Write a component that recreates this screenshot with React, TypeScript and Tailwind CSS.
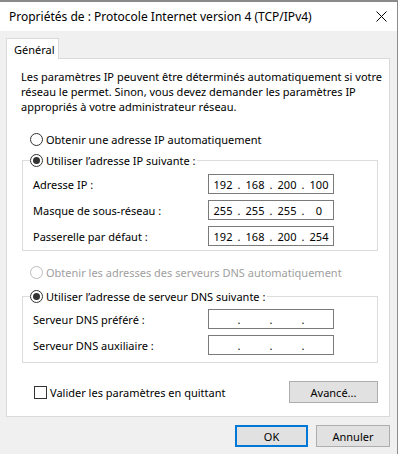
import React from "react";

function Radio({ checked, disabled }: { checked?: boolean; disabled?: boolean }) {
  return (
    <span
      className={
        "w-[13px] h-[13px] rounded-full border bg-white flex items-center justify-center shrink-0 " +
        (disabled ? "border-[#bcbcbc]" : "border-[#333333]")
      }
    >
      {checked && <span className="w-[7px] h-[7px] rounded-full bg-[#333333]" />}
    </span>
  );
}

function IpBox({ values }: { values: string[] }) {
  return (
    <div className="w-[126px] h-[20px] border border-[#7a7a7a] bg-white grid grid-cols-[28px_4px_28px_4px_28px_4px_28px] items-center leading-none">
      {values.map((v, i) => (
        <React.Fragment key={i}>
          {i > 0 && <span className="text-center">.</span>}
          <span className="text-center">{v}</span>
        </React.Fragment>
      ))}
    </div>
  );
}

function Row({ label, values, mt }: { label: string; values: string[]; mt: string }) {
  return (
    <div className={"flex items-center justify-between h-[20px] pl-[10px] pr-[43px] " + mt}>
      <span>{label}</span>
      <IpBox values={values} />
    </div>
  );
}

export default function App() {
  return (
    <div className="w-[402px] h-[454px] bg-white flex overflow-hidden font-['Noto_Sans','Liberation_Sans',sans-serif] text-[11px] text-black leading-[15px]">
      <div className="w-[397px] flex flex-col shrink-0">
        <div className="h-[2px] bg-[#8a8a8a]" />
        <div className="h-[29px] bg-white flex items-center justify-between pl-[9px] pr-[9px]">
          <span className="text-[12px]">Propriétés de : Protocole Internet version 4 (TCP/IPv4)</span>
          <svg width="11" height="11" viewBox="0 0 11 11" className="mr-[1px]">
            <path d="M0.5 0.5 L10.5 10.5 M10.5 0.5 L0.5 10.5" stroke="#000" strokeWidth="1" />
          </svg>
        </div>
        <div className="flex-1 bg-[#f0f0f0] pt-[7px] px-[6px] flex flex-col">
          <div className="w-[53px] h-[21px] bg-white border border-b-0 border-[#d9d9d9] -mb-[1px] relative z-10 flex items-center pl-[7px]">
            Général
          </div>
          <div className="w-[384px] h-[359px] bg-white border border-[#d9d9d9] flex flex-col">
            <p className="pl-[14px] pt-[10px] whitespace-nowrap">
              Les paramètres IP peuvent être déterminés automatiquement si votre
              <br />
              réseau le permet. Sinon, vous devez demander les paramètres IP
              <br />
              appropriés à votre administrateur réseau.
            </p>

            <div className="flex items-center gap-[3px] ml-[23px] mt-[17px] h-[16px]">
              <Radio />
              <span>Obtenir une adresse IP automatiquement</span>
            </div>

            <fieldset className="ml-[15px] mt-[5px] w-[356px] border border-[#dcdcdc] pb-[4px]">
              <legend className="ml-[7px] pr-[2px] flex items-center gap-[3px] h-[16px]">
                <Radio checked />
                <span>Utiliser l’adresse IP suivante :</span>
              </legend>
              <Row label="Adresse IP :" values={["192", "168", "200", "100"]} mt="mt-[6px]" />
              <Row label="Masque de sous-réseau :" values={["255", "255", "255", "0"]} mt="mt-[6px]" />
              <Row label="Passerelle par défaut :" values={["192", "168", "200", "254"]} mt="mt-[6px]" />
            </fieldset>

            <div className="flex items-center gap-[3px] ml-[23px] mt-[13px] h-[16px] text-[#a0a0a0]">
              <Radio disabled />
              <span>Obtenir les adresses des serveurs DNS automatiquement</span>
            </div>

            <fieldset className="ml-[15px] mt-[8px] w-[356px] border border-[#dcdcdc] pb-[7px]">
              <legend className="ml-[7px] pr-[2px] flex items-center gap-[3px] h-[16px]">
                <Radio checked />
                <span>Utiliser l’adresse de serveur DNS suivante :</span>
              </legend>
              <Row label="Serveur DNS préféré :" values={["", "", "", ""]} mt="mt-[5px]" />
              <Row label="Serveur DNS auxiliaire :" values={["", "", "", ""]} mt="mt-[6px]" />
            </fieldset>

            <div className="flex items-center justify-between mt-[18px] h-[22px] pl-[27px] pr-[11px]">
              <div className="flex items-center gap-[3px]">
                <span className="w-[13px] h-[13px] border border-[#333333] bg-white" />
                <span>Valider les paramètres en quittant</span>
              </div>
              <button className="w-[89px] h-[22px] bg-[#e1e1e1] border border-[#adadad] flex items-center justify-center">
                Avancé...
              </button>
            </div>
          </div>
          <div className="flex justify-end gap-[8px] mt-[8px] pr-[-1px] mr-[1px]">
            <button className="w-[73px] h-[22px] bg-[#e1e1e1] border-2 border-[#0078d7] flex items-center justify-center">
              OK
            </button>
            <button className="w-[74px] h-[22px] bg-[#e1e1e1] border border-[#adadad] flex items-center justify-center">
              Annuler
            </button>
          </div>
        </div>
      </div>
      <div className="w-[1px] bg-[#8c8c8c] shrink-0" />
      <div className="flex-1 bg-white" />
    </div>
  );
}
